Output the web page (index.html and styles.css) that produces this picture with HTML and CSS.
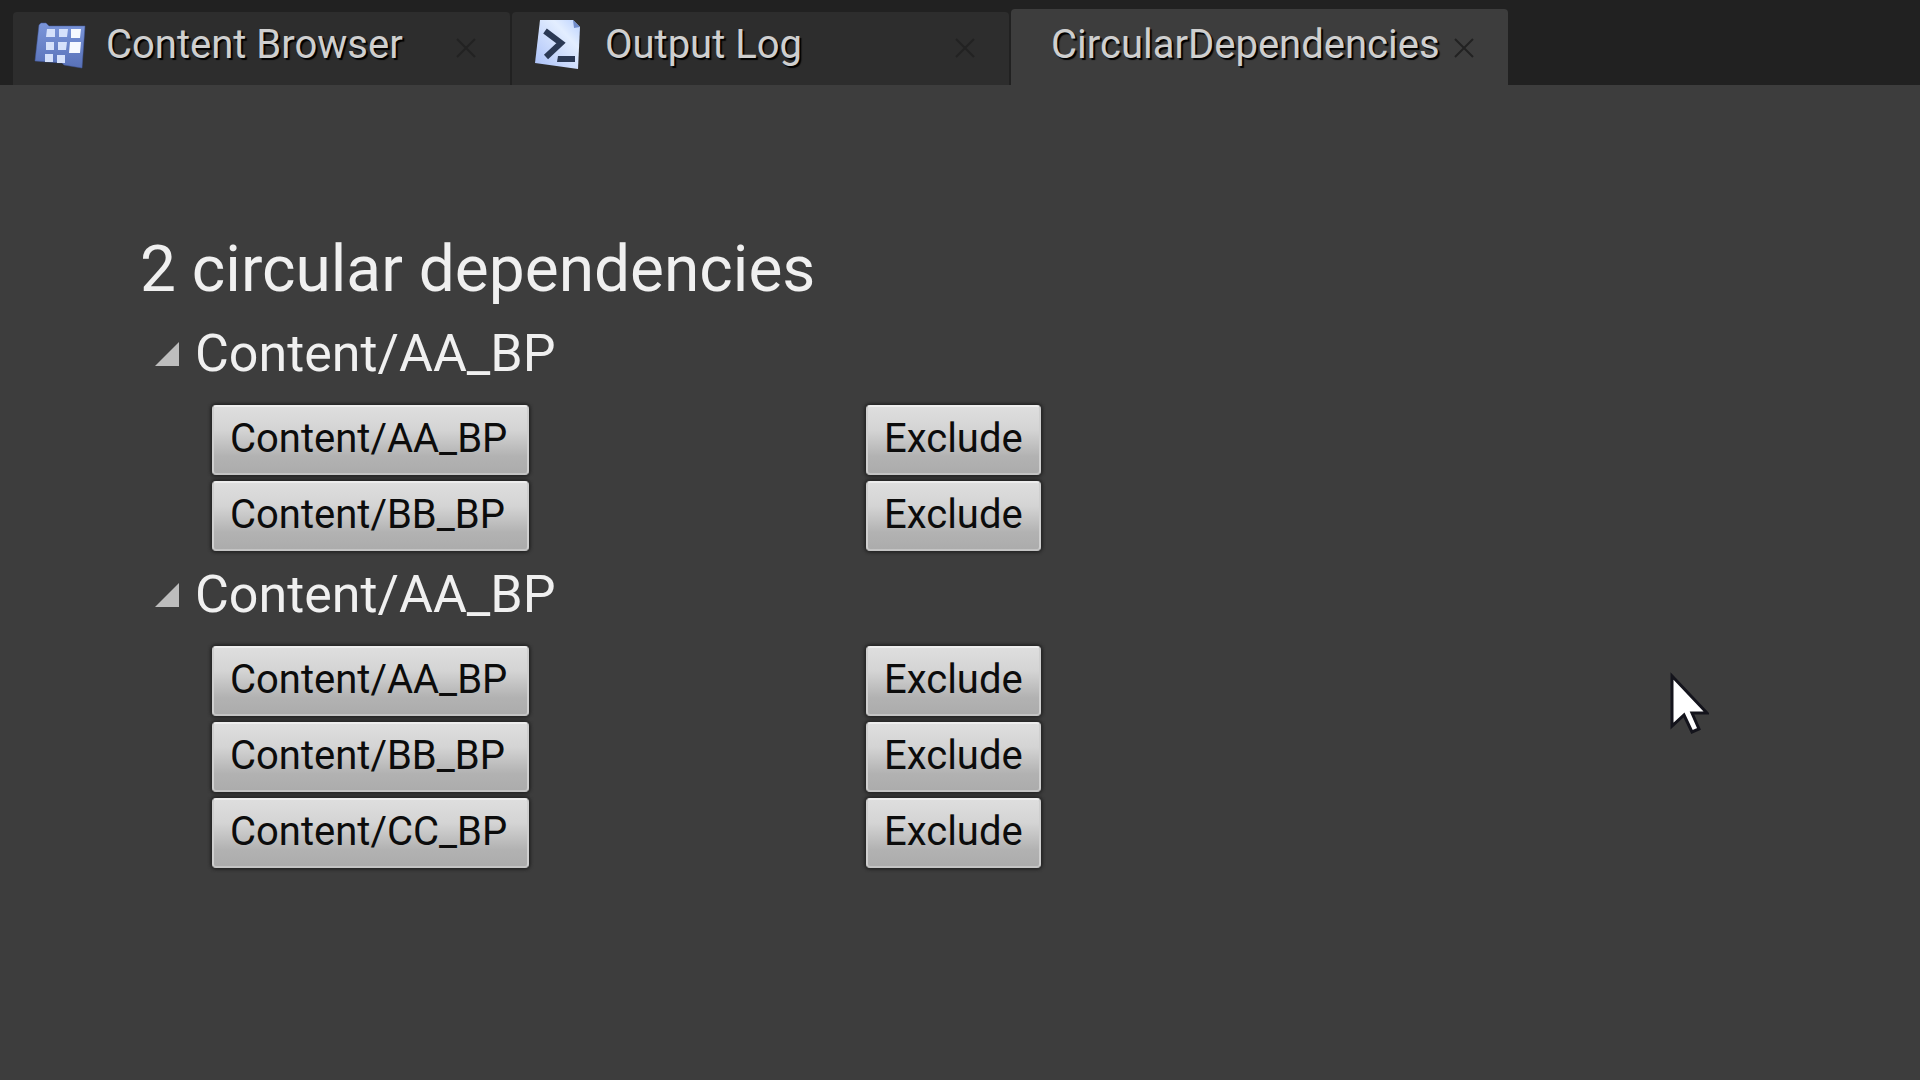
FILE: index.html
```html
<!DOCTYPE html>
<html lang="en">
<head>
<meta charset="utf-8">
<title>CircularDependencies</title>
<link rel="stylesheet" href="styles.css">
</head>
<body>
<nav class="tabs" aria-label="Editor tabs">
  <div class="tab">
    <svg class="tab-icon" viewBox="0 0 54 54" aria-hidden="true">
      <defs>
        <linearGradient id="folder" x1="0" y1="0" x2="0" y2="1"><stop offset="0" stop-color="#7b96da"/><stop offset="1" stop-color="#5871b8"/></linearGradient>
      </defs>
      <path d="M6 7 8 5H13L16 8 52 8 49 50 31 47 29 45 2 43Z" fill="url(#folder)" stroke="#4159a0" stroke-opacity=".5"/>
      <g fill="#d5e1fb">
        <path d="M14 11h8v8h-9zM26 11h9l-1 8h-8zM13 24h8v8h-8zM25 24h9l-1 8h-8zM12 36h8v8h-8zM24 37h8v8h-8z"/>
        <path d="M38 11h10l-1 9h-9zM37 24h11l-1 11H36z" fill="#f6f9ff"/>
      </g>
    </svg>
    <a class="tab-label" href="#content-browser">Content Browser</a>
    <button class="close" aria-label="Close Content Browser"><svg viewBox="0 0 20 20"><path d="M1 1 19 19M19 1 1 19"/></svg></button>
  </div>
  <div class="tab">
    <svg class="tab-icon" viewBox="0 0 54 54" aria-hidden="true">
      <defs>
        <linearGradient id="sheet" x1="1" y1="0" x2="0" y2="1"><stop offset="0" stop-color="#b9d0ff"/><stop offset=".3" stop-color="#e3eeff"/><stop offset="1" stop-color="#a9bff8"/></linearGradient>
      </defs>
      <path d="M8 2H41L48 9 46 51 3 45Z" fill="url(#sheet)"/>
      <path d="M41 2 48 9 42 10Z" fill="#6f8bcb"/>
      <path d="M13 13 29 25 14 39" fill="none" stroke="#2b3954" stroke-width="6"/>
      <path d="M26 38H43V44H25Z" fill="#2b3954"/>
    </svg>
    <a class="tab-label" href="#output-log">Output Log</a>
    <button class="close" aria-label="Close Output Log"><svg viewBox="0 0 20 20"><path d="M1 1 19 19M19 1 1 19"/></svg></button>
  </div>
  <div class="tab tab-active">
    <a class="tab-label" href="#circular-dependencies" aria-current="page">CircularDependencies</a>
    <button class="close" aria-label="Close CircularDependencies"><svg viewBox="0 0 20 20"><path d="M1 1 19 19M19 1 1 19"/></svg></button>
  </div>
</nav>
<main class="panel" id="circular-dependencies">
  <h1 class="title">2 circular dependencies</h1>
  <details class="group" open>
    <summary class="group-head"><svg class="arrow" viewBox="0 0 24 24" aria-hidden="true"><path d="M24 0V24H0Z"/></svg>Content/AA_BP</summary>
    <ul class="rows">
      <li class="row"><button class="btn btn-asset">Content/AA_BP</button><button class="btn">Exclude</button></li>
      <li class="row"><button class="btn btn-asset">Content/BB_BP</button><button class="btn">Exclude</button></li>
    </ul>
  </details>
  <details class="group" open>
    <summary class="group-head"><svg class="arrow" viewBox="0 0 24 24" aria-hidden="true"><path d="M24 0V24H0Z"/></svg>Content/AA_BP</summary>
    <ul class="rows">
      <li class="row"><button class="btn btn-asset">Content/AA_BP</button><button class="btn">Exclude</button></li>
      <li class="row"><button class="btn btn-asset">Content/BB_BP</button><button class="btn">Exclude</button></li>
      <li class="row"><button class="btn btn-asset">Content/CC_BP</button><button class="btn">Exclude</button></li>
    </ul>
  </details>
</main>
<svg class="cursor" viewBox="0 0 40 64" aria-hidden="true"><path d="M3 4V54L15 43L23 60L30 57L23 41H38Z"/></svg>
</body>
</html>
```
FILE: styles.css
```css
* { box-sizing: border-box; }
body {
  margin: 0;
  min-height: 100vh;
  background: #3d3d3d;
  color: #f0f0f0;
  font-family: Roboto, "Liberation Sans", sans-serif;
}
button { font: inherit; cursor: pointer; }
.tabs {
  display: flex;
  align-items: flex-end;
  gap: 2px;
  height: 85px;
  padding-left: 13px;
  background: #212121;
}
.tab {
  flex: 0 1 497px;
  min-width: 0;
  display: flex;
  align-items: center;
  height: 73px;
  padding: 0 34px 7px 20px;
  border-radius: 4px 4px 0 0;
  background: #2d2d2d;
}
.tab-active {
  height: 76px;
  padding: 0 34px 4px 40px;
  background: #3d3d3d;
}
.tab-icon { flex: none; width: 54px; height: 54px; margin-right: 19px; }
.tab-label {
  flex: 1;
  min-width: 0;
  overflow: hidden;
  white-space: nowrap;
  color: #cfcfcf;
  font-size: 40px;
  line-height: 56px;
  text-decoration: none;
  text-shadow: 2px 2px 1px #000;
}
.close {
  flex: none;
  display: flex;
  margin: 6px 0 0 8px;
  padding: 0;
  border: 0;
  background: none;
}
.close svg { width: 20px; height: 20px; fill: none; stroke: #222; stroke-width: 2; }
.panel { padding: 149px 140px 40px; }
.title { margin: 0 0 4px; font-size: 64px; line-height: 72px; font-weight: 400; }
.group-head {
  display: flex;
  align-items: center;
  gap: 16px;
  height: 95px;
  padding: 0 0 7px 15px;
  font-size: 52px;
  line-height: 64px;
  list-style: none;
  cursor: pointer;
}
.arrow { width: 24px; height: 24px; fill: #bdbdbd; }
.rows {
  display: grid;
  gap: 6px;
  margin: 0;
  padding: 0 0 0 72px;
  list-style: none;
}
.row { display: grid; grid-template-columns: 654px auto; justify-content: start; justify-items: start; }
.btn {
  height: 70px;
  padding: 0 16px 3px;
  border: 2px solid;
  border-color: #ededed #cfcfcf #c4c4c4;
  border-radius: 4px;
  background: linear-gradient(#dedede, #d4d4d4 35%, #b2b2b2 75%, #acacac);
  box-shadow: 0 0 3px 2px #262626;
  color: #0c0c0c;
  font-size: 40px;
  line-height: 48px;
  text-align: left;
}
.btn-asset { min-width: 317px; }
.cursor {
  position: absolute;
  left: 1669px;
  top: 672px;
  width: 40px;
  height: 64px;
  fill: #fff;
  stroke: #14141c;
  stroke-width: 3;
  pointer-events: none;
}
```
